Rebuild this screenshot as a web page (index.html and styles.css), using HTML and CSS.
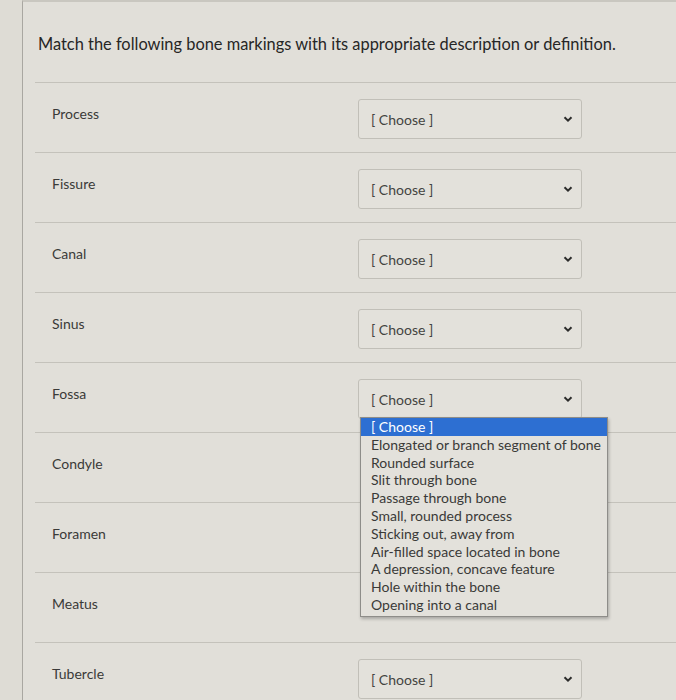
FILE: index.html
```html
<!DOCTYPE html>
<html>
<head>
<meta charset="utf-8">
<link rel="stylesheet" href="styles.css">
</head>
<body>
<div class="panel">
  <p class="question">Match the following bone markings with its appropriate description or definition.</p>
  <div class="rows">
    <div class="row"><div class="label">Process</div><div class="select"><span>[ Choose ]</span><svg class="chev" viewBox="0 0 10 6"><path d="M1.5 1.2 L5 4.6 L8.5 1.2"/></svg></div></div>
    <div class="row"><div class="label">Fissure</div><div class="select"><span>[ Choose ]</span><svg class="chev" viewBox="0 0 10 6"><path d="M1.5 1.2 L5 4.6 L8.5 1.2"/></svg></div></div>
    <div class="row"><div class="label">Canal</div><div class="select"><span>[ Choose ]</span><svg class="chev" viewBox="0 0 10 6"><path d="M1.5 1.2 L5 4.6 L8.5 1.2"/></svg></div></div>
    <div class="row"><div class="label">Sinus</div><div class="select"><span>[ Choose ]</span><svg class="chev" viewBox="0 0 10 6"><path d="M1.5 1.2 L5 4.6 L8.5 1.2"/></svg></div></div>
    <div class="row"><div class="label">Fossa</div><div class="select open"><span>[ Choose ]</span><svg class="chev" viewBox="0 0 10 6"><path d="M1.5 1.2 L5 4.6 L8.5 1.2"/></svg>
      <ul class="menu">
        <li class="active">[ Choose ]</li>
        <li>Elongated or branch segment of bone</li>
        <li>Rounded surface</li>
        <li>Slit through bone</li>
        <li>Passage through bone</li>
        <li>Small, rounded process</li>
        <li>Sticking out, away from</li>
        <li>Air-filled space located in bone</li>
        <li>A depression, concave feature</li>
        <li>Hole within the bone</li>
        <li>Opening into a canal</li>
      </ul>
    </div></div>
    <div class="row"><div class="label">Condyle</div></div>
    <div class="row"><div class="label">Foramen</div></div>
    <div class="row"><div class="label">Meatus</div></div>
    <div class="row"><div class="label">Tubercle</div><div class="select"><span>[ Choose ]</span><svg class="chev" viewBox="0 0 10 6"><path d="M1.5 1.2 L5 4.6 L8.5 1.2"/></svg></div></div>
  </div>
</div>
</body>
</html>
```

FILE: styles.css
```css
html, body {
  margin: 0;
  padding: 0;
}
body {
  background: #dedcd5;
  font-family: Lato, "Open Sans", sans-serif;
  color: #3a3a38;
  width: 676px;
  height: 700px;
  overflow: hidden;
}
.panel {
  margin-left: 22px;
  border-left: 1px solid #a9a7a1;
  border-top: 2px solid #c9c7c0;
  background: #e1dfd9;
  min-height: 700px;
}
.question {
  margin: 0;
  padding: 32px 0 0 15px;
  font-size: 16.4px;
  line-height: 20px;
  height: 48px;
  color: #262625;
}
.rows {
  margin-left: 12px;
}
.row {
  display: flex;
  height: 70px;
  border-top: 1px solid #c4c2bb;
  box-sizing: border-box;
}
.label {
  width: 323px;
  padding: 22px 0 0 17px;
  box-sizing: border-box;
  font-size: 14px;
  line-height: 18px;
  color: #3a3a38;
}
.select {
  position: relative;
  margin-top: 16px;
  width: 224px;
  height: 40px;
  box-sizing: border-box;
  border: 1px solid #c1bfb8;
  border-radius: 3px;
  background: #e3e1db;
  display: flex;
  align-items: center;
  justify-content: space-between;
  padding: 0 8px 0 12px;
  font-size: 14px;
  color: #444441;
}
.chev {
  width: 10px;
  height: 6px;
  fill: none;
  stroke: #2c2c2b;
  stroke-width: 2;
}
.menu {
  position: absolute;
  top: 37px;
  left: 1px;
  width: 246px;
  margin: 0;
  padding: 0 0 2px 0;
  list-style: none;
  background: #e3e1db;
  border: 1px solid #8e8d89;
  box-shadow: 1px 2px 3px rgba(0,0,0,0.25);
  z-index: 5;
  font-size: 14px;
  line-height: 17.8px;
  color: #3a3a38;
}
.menu li {
  padding: 0 0 0 10px;
  white-space: nowrap;
}
.menu li.active {
  background: #2d6fd2;
  color: #ffffff;
}
```
